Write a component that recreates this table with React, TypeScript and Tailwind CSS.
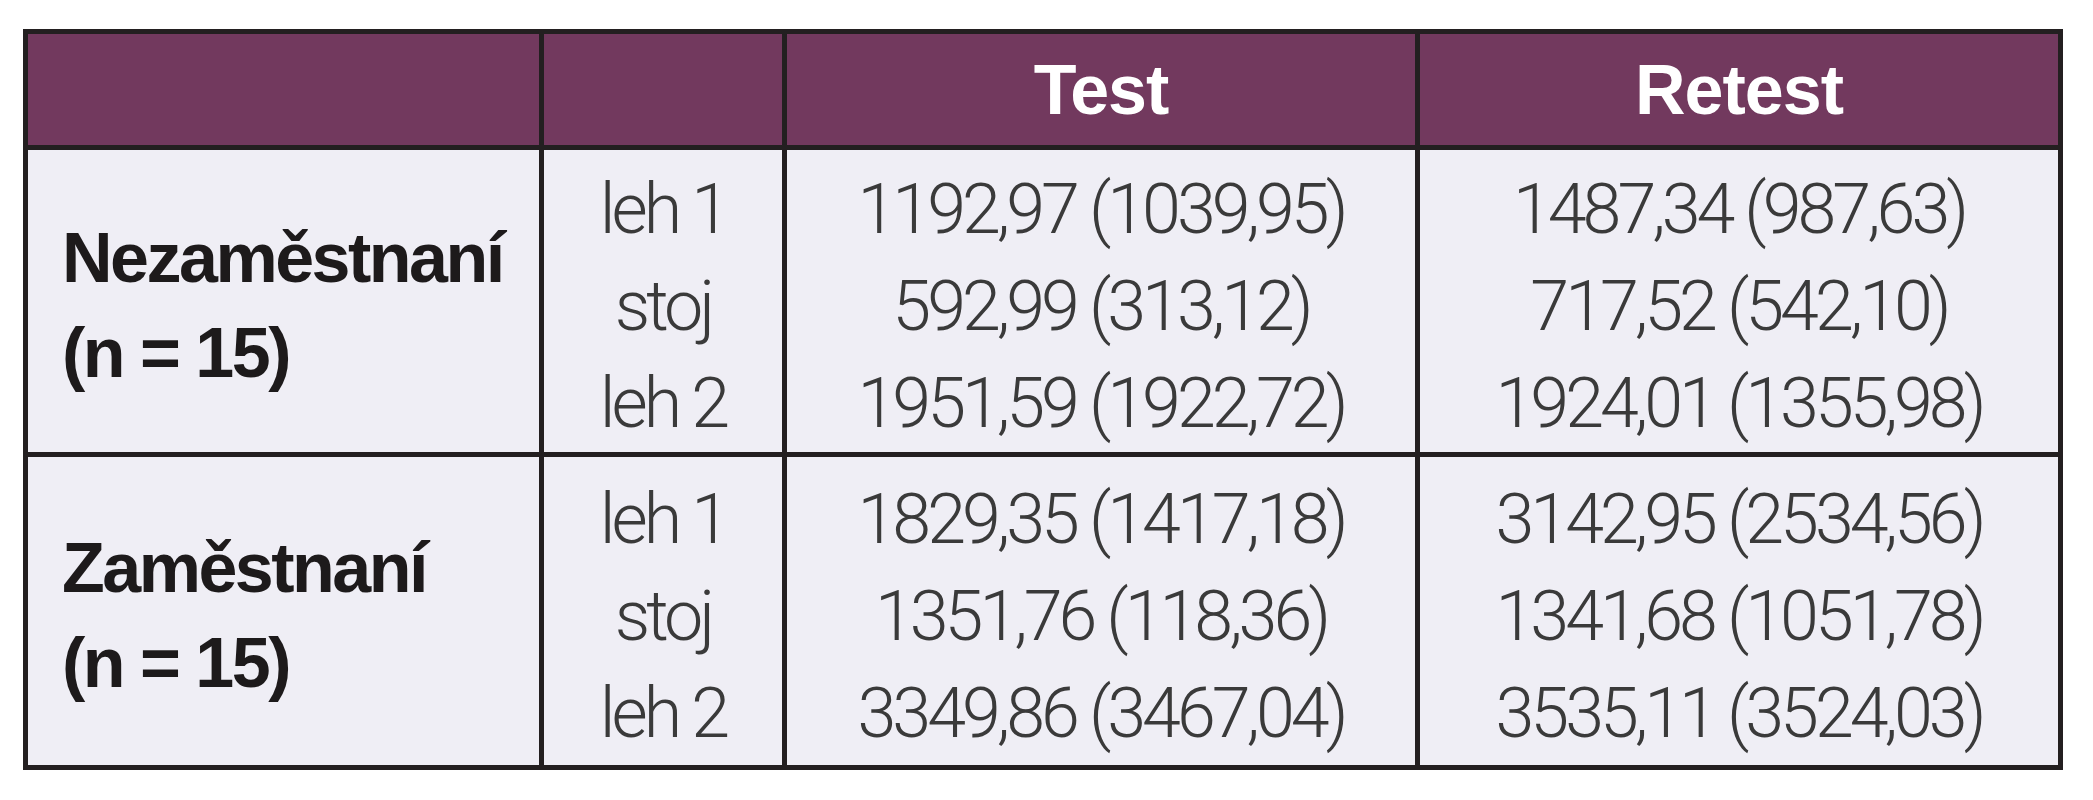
const groups = [
  {
    label: 'Nezaměstnaní',
    n: '(n = 15)',
    rows: ['leh 1', 'stoj', 'leh 2'],
    test: ['1192,97 (1039,95)', '592,99 (313,12)', '1951,59 (1922,72)'],
    retest: ['1487,34 (987,63)', '717,52 (542,10)', '1924,01 (1355,98)'],
  },
  {
    label: 'Zaměstnaní',
    n: '(n = 15)',
    rows: ['leh 1', 'stoj', 'leh 2'],
    test: ['1829,35 (1417,18)', '1351,76 (118,36)', '3349,86 (3467,04)'],
    retest: ['3142,95 (2534,56)', '1341,68 (1051,78)', '3535,11 (3524,03)'],
  },
]

function DataCell({ lines }: { lines: string[] }) {
  return (
    <div className="bg-[#efeef5] flex flex-col items-center justify-center pt-[10px]">
      {lines.map((l) => (
        <div key={l} className="text-[70px] leading-[97px] tracking-[-4px] font-light text-[#3a3a3a] whitespace-nowrap">
          {l}
        </div>
      ))}
    </div>
  )
}

export default function App() {
  return (
    <div className="bg-white min-h-[800px] pt-[29px] pl-[23px] font-['Roboto','Liberation_Sans',Arial,sans-serif]">
      <div className="w-fit bg-[#231f20] p-[5px] grid grid-cols-[511px_238px_628px_638px] grid-rows-[111px_302px_308px] gap-[5px]">
        <div className="bg-[#72395e]" />
        <div className="bg-[#72395e]" />
        <div className="bg-[#72395e] flex items-center justify-center">
          <span className="font-['Liberation_Sans',Arial,sans-serif] font-bold text-[70px] leading-none tracking-[-1px] text-white">Test</span>
        </div>
        <div className="bg-[#72395e] flex items-center justify-center">
          <span className="font-['Liberation_Sans',Arial,sans-serif] font-bold text-[70px] leading-none tracking-[-1px] text-white">Retest</span>
        </div>

        {groups.map((g) => (
          <>
            <div key={g.label} className="bg-[#efeef5] flex flex-col justify-center pl-[34px] pt-[10px] font-['Liberation_Sans',Arial,sans-serif] font-bold text-[70px] leading-[95px] tracking-[-2.5px] text-[#1d1a1b]">
              <div>{g.label}</div>
              <div>{g.n}</div>
            </div>
            <DataCell lines={g.rows} />
            <DataCell lines={g.test} />
            <DataCell lines={g.retest} />
          </>
        ))}
      </div>
    </div>
  )
}
